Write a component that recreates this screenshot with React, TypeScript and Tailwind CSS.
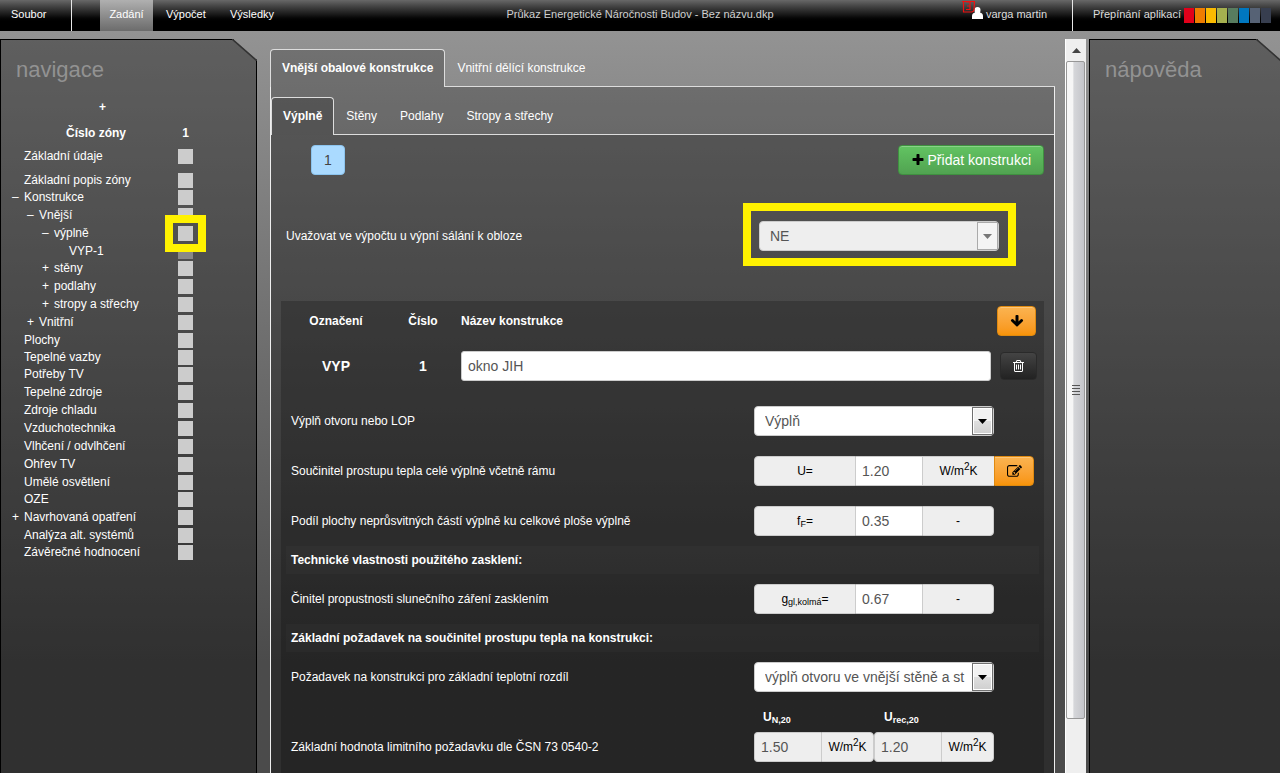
import React from "react";

type NavItem = {
  label: string;
  level: number;
  sign?: "+" | "–";
  height: string;
  active?: boolean;
  dim?: boolean;
};

const tall = "h-6";
const row = "h-[18px]";
const tight = "h-[17px]";

const navItems: NavItem[] = [
  { label: "Základní údaje", level: 0, height: tall },
  { label: "Základní popis zóny", level: 0, height: tight },
  { label: "Konstrukce", level: 0, sign: "–", height: row },
  { label: "Vnější", level: 1, sign: "–", height: row },
  { label: "výplně", level: 2, sign: "–", height: row, active: true },
  { label: "VYP-1", level: 3, height: tight, dim: true },
  { label: "stěny", level: 2, sign: "+", height: row },
  { label: "podlahy", level: 2, sign: "+", height: row },
  { label: "stropy a střechy", level: 2, sign: "+", height: row },
  { label: "Vnitřní", level: 1, sign: "+", height: row },
  { label: "Plochy", level: 0, height: tight },
  { label: "Tepelné vazby", level: 0, height: tight },
  { label: "Potřeby TV", level: 0, height: row },
  { label: "Tepelné zdroje", level: 0, height: row },
  { label: "Zdroje chladu", level: 0, height: row },
  { label: "Vzduchotechnika", level: 0, height: row },
  { label: "Vlhčení / odvlhčení", level: 0, height: row },
  { label: "Ohřev TV", level: 0, height: row },
  { label: "Umělé osvětlení", level: 0, height: tight },
  { label: "OZE", level: 0, height: row },
  { label: "Navrhovaná opatření", level: 0, sign: "+", height: row },
  { label: "Analýza alt. systémů", level: 0, height: tight },
  { label: "Závěrečné hodnocení", level: 0, height: row },
];

const indents = ["pl-[11px]", "pl-[26px]", "pl-[41px]", "pl-[56px]"];

const swatches = [
  "bg-[#e2001a]",
  "bg-[#ef7d00]",
  "bg-[#fbba00]",
  "bg-[#a5b04f]",
  "bg-[#587c5f]",
  "bg-[#0077c0]",
  "bg-[#566275]",
  "bg-[#373e4f]",
];

function Header() {
  return (
    <header className="flex h-[31px] shrink-0 bg-linear-to-b from-[#686868] via-[#1c1c1c] via-45% to-black to-75% text-[11px] text-white">
      <nav className="flex flex-1">
        <a href="#soubor" className="flex w-[71px] items-center pb-[3px] pl-[11px]">Soubor</a>
        <span className="mr-7 w-px bg-[#e8e8e8]" />
        <a href="#zadani" className="flex w-[53px] items-center justify-center bg-linear-to-b from-[#b0b0b0] to-[#6c6c6c] pb-[3px]">Zadání</a>
        <a href="#vypocet" className="flex w-16 items-center pb-[3px] pl-[13px]">Výpočet</a>
        <a href="#vysledky" className="flex items-center px-[13px] pb-[3px]">Výsledky</a>
      </nav>
      <div className="flex items-center pb-[3px] text-[#d0d0d0]">
        Průkaz Energetické Náročnosti Budov - Bez názvu.dkp
      </div>
      <div className="flex flex-1 justify-end text-[#dddddd]">
        <a href="#uzivatel" className="flex pr-[25px]">
          <svg width="24" height="20" viewBox="0 0 24 20" className="shrink-0">
            <path d="M10 19v-3q0-3 3-3.500q-.500-1-.500-2.500q0-3 3-3t3 3q0 1.500-.500 2.500q3 .500 3 3.500v3z" fill="#fff" />
            <path d="M0 1.500H13M1.500 1.500V12H9.500q2 0 2.500-2L12.500 1M4 2H8V6H5M8 6V9.500H4" fill="none" stroke="#f01010" strokeWidth="1.200" />
          </svg>
          <span className="flex items-center pb-[3px]">varga martin</span>
        </a>
        <span className="w-px bg-[#e8e8e8]" />
        <div className="flex w-[207px] items-center justify-end pr-[9px]">
          <span className="pb-[3px]">Přepínání aplikací</span>
          <div className="ml-[3px] flex gap-px">
            {swatches.map((color) => (
              <button key={color} type="button" aria-label="Aplikace" className={`h-[15px] w-[10px] ${color}`} />
            ))}
          </div>
        </div>
      </div>
    </header>
  );
}

function SidePanel({ title, className, children }: { title: string; className: string; children?: React.ReactNode }) {
  return (
    <aside className={`relative shrink-0 ${className}`}>
      <div className="h-full border border-b-0 border-black bg-black/35 pt-4 [clip-path:polygon(0_0,calc(100%-24px)_0,100%_21px,100%_100%,0_100%)]">
        <h2 className="px-[15px] text-[22px] leading-[28px] text-[#929292]">{title}</h2>
        {children}
      </div>
      <svg width="25" height="22" className="absolute top-0 right-0" viewBox="0 0 25 22">
        <path d="M0 0L25 22" stroke="#333" strokeWidth="1.500" />
      </svg>
    </aside>
  );
}

function Navigation() {
  return (
    <nav className="pr-[63px]">
      <div className="mt-[15px] flex h-4 items-center pl-[98px] font-bold">
        <button type="button">+</button>
      </div>
      <div className="mt-[10px] flex h-4 items-center pl-[65px] font-bold">
        <span className="flex-1">Číslo zóny</span>
        <span className="w-[15px] text-center">1</span>
      </div>
      <ul className="mt-2">
        {navItems.map((item) => (
          <li key={item.label} className={`flex items-start ${item.height} ${indents[item.level]}`}>
            <span className="w-3 leading-[15px]">{item.sign}</span>
            <a href="#zona" className="flex-1 leading-[15px] whitespace-nowrap">{item.label}</a>
            <span className="relative">
              <button
                type="button"
                aria-label={item.label}
                className={`block size-[15px] ${item.dim ? "bg-[#888888]" : "bg-[#cccccc]"}`}
              />
              {item.active && (
                <span className="pointer-events-none absolute -top-[11px] -left-[13px] z-10 h-[37px] w-[41px] border-8 border-[#fff200]" />
              )}
            </span>
          </li>
        ))}
      </ul>
    </nav>
  );
}

function SelectBox({ id, value, disabled }: { id: string; value: string; disabled?: boolean }) {
  return (
    <div className="relative w-60">
      <select
        id={id}
        disabled={disabled}
        className={`block h-[30px] w-full appearance-none truncate rounded-[4px] border border-[#cccccc] pr-[27px] pl-[10px] text-[14px] text-clip text-[#555555] opacity-100 ${disabled ? "bg-[#eeeeee]" : "bg-white"}`}
      >
        <option>{value}</option>
      </select>
      <span
        className={`pointer-events-none absolute top-px right-px flex h-7 w-[21px] items-center justify-center border ${disabled ? "border-[#aaaaaa] bg-[#f4f4f4] text-[#777777]" : "border-[#707070] bg-linear-to-b from-[#f2f2f2] from-50% via-[#dfdfdf] via-50% to-[#cfcfcf] text-black shadow-[inset_0_0_0_1px_white]"}`}
      >
        <svg width="9" height="5" viewBox="0 0 9 5">
          <path d="M0 0H9L4.500 5z" fill="currentColor" />
        </svg>
      </span>
    </div>
  );
}

const addon = "flex h-[30px] items-center justify-center border border-[#cccccc] bg-[#eeeeee] text-black";
const field = "h-[30px] border-y border-[#cccccc] pl-[6px] text-[14px] text-[#555555]";
const small = "text-[9px] leading-none";
const orange =
  "flex h-[30px] items-center justify-center border border-[#e08a10] bg-linear-to-b from-[#fbb450] to-[#f89406] text-black shadow-[inset_0_1px_0_rgba(255,255,255,0.25)]";

function Unit() {
  return (
    <span>
      W/m<sup className="text-[10px] leading-none">2</sup>K
    </span>
  );
}

function ValueGroup({ id, symbol, value, unit, action }: { id: string; symbol: React.ReactNode; value: string; unit: React.ReactNode; action?: boolean }) {
  return (
    <div className="flex">
      <span className={`${addon} w-[102px] rounded-l-[4px]`}><span>{symbol}</span></span>
      <input id={id} defaultValue={value} className={`${field} w-[66px] bg-white`} />
      <span className={`${addon} w-[72px] ${action ? "border-r-0" : "rounded-r-[4px]"}`}>{unit}</span>
      {action && (
        <button type="button" aria-label="Upravit" className={`${orange} w-10 rounded-r-[4px]`}>
          <svg width="15" height="15" viewBox="0 0 1792 1792" fill="currentColor">
            <path d="M888 1184l116-116-152-152-116 116v56h96v96h56zm440-720q-16-16-33 1l-350 350q-17 17-1 33t33-1l350-350q17-17 1-33zm80 594v190q0 119-84.500 203.500t-203.500 84.500h-832q-119 0-203.500-84.500t-84.500-203.500v-832q0-119 84.500-203.500t203.500-84.500h832q63 0 117 25 15 7 18 23 3 17-9 29l-49 49q-14 14-32 8-23-6-45-6h-832q-66 0-113 47t-47 113v832q0 66 47 113t113 47h832q66 0 113-47t47-113v-126q0-13 9-22l64-64q15-15 35-7t20 29zm-96-738l288 288-672 672h-288v-288zm444 132l-92 92-288-288 92-92q28-28 68-28t68 28l152 152q28 28 28 68t-28 68z" />
          </svg>
        </button>
      )}
    </div>
  );
}

function LimitGroup({ id, value }: { id: string; value: string }) {
  return (
    <div className="flex w-[120px]">
      <input id={id} disabled aria-label={id} defaultValue={value} className={`${field} w-[67px] rounded-l-[4px] border-l bg-[#eeeeee]`} />
      <span className={`${addon} flex-1 rounded-r-[4px]`}><Unit /></span>
    </div>
  );
}

function FormRow({ label, htmlFor, className, children }: { label: string; htmlFor: string; className: string; children: React.ReactNode }) {
  return (
    <div className={`flex h-[30px] items-center pl-[10px] ${className}`}>
      <label htmlFor={htmlFor} className="flex-1">{label}</label>
      <div className="w-[290px]">{children}</div>
    </div>
  );
}

function SectionTitle({ children }: { children: React.ReactNode }) {
  return <h3 className="mx-[5px] my-[10px] flex h-7 items-center bg-white/2 pl-[5px] font-bold">{children}</h3>;
}

function ConstructionCard() {
  return (
    <section className="mx-[10px] mt-[35px] flex-1 bg-black/20 pt-[5px]">
      <div className="flex h-[30px] items-center pr-2 font-bold">
        <span className="w-[110px] text-center">Označení</span>
        <span className="w-[64px] text-center">Číslo</span>
        <label htmlFor="nazev" className="ml-[6px] flex-1">Název konstrukce</label>
        <button type="button" aria-label="Dolů" className={`${orange} w-[39px] rounded-[4px]`}>
          <svg width="14" height="14" viewBox="0 0 1792 1792" fill="currentColor">
            <path d="M1675 832q0 53-37 90l-651 652q-39 37-91 37-53 0-90-37l-651-652q-38-36-38-90 0-53 38-91l74-75q39-37 91-37 53 0 90 37l294 294v-704q0-52 38-90t90-38h128q52 0 90 38t38 90v704l294-294q37-37 90-37 52 0 91 37l75 75q37 39 37 91z" />
          </svg>
        </button>
      </div>
      <div className="mt-[15px] flex h-[30px] items-center pr-[7px] text-[14px] font-bold">
        <span className="w-[110px] text-center">VYP</span>
        <span className="w-[64px] text-center">1</span>
        <input
          id="nazev"
          defaultValue="okno JIH"
          className="ml-[6px] h-[30px] min-w-0 flex-1 rounded-[3px] border border-[#cccccc] bg-white pl-[6px] font-normal text-[#555555]"
        />
        <button
          type="button"
          aria-label="Smazat"
          className="ml-[9px] flex h-7 w-[37px] items-center justify-center rounded-[4px] border border-[#2a2a2a] bg-linear-to-b from-[#444444] to-[#222222] text-white"
        >
          <svg width="11" height="14" viewBox="0 0 1408 1792" fill="currentColor">
            <path d="M512 736v576q0 14-9 23t-23 9h-64q-14 0-23-9t-9-23V736q0-14 9-23t23-9h64q14 0 23 9t9 23zm256 0v576q0 14-9 23t-23 9h-64q-14 0-23-9t-9-23V736q0-14 9-23t23-9h64q14 0 23 9t9 23zm256 0v576q0 14-9 23t-23 9h-64q-14 0-23-9t-9-23V736q0-14 9-23t23-9h64q14 0 23 9t9 23zm128 724V512H256v948q0 22 7 40.500t14.500 27 10.500 8.500h832q3 0 10.500-8.500t14.500-27 7-40.500zM480 384h448l-48-117q-7-9-17-11H546q-10 2-17 11zm928 32v64q0 14-9 23t-23 9h-96v948q0 83-47 143.500t-113 60.500H288q-66 0-113-58.500T128 1464V512H32q-14 0-23-9t-9-23v-64q0-14 9-23t23-9h309l70-167q15-37 54-63t79-26h320q40 0 79 26t54 63l70 167h309q14 0 23 9t9 23z" />
          </svg>
        </button>
      </div>
      <FormRow label="Výplň otvoru nebo LOP" htmlFor="vypln" className="mt-[25px]">
        <SelectBox id="vypln" value="Výplň" />
      </FormRow>
      <FormRow label="Součinitel prostupu tepla celé výplně včetně rámu" htmlFor="u" className="mt-5">
        <ValueGroup id="u" symbol="U=" value="1.20" unit={<Unit />} action />
      </FormRow>
      <FormRow label="Podíl plochy neprůsvitných částí výplně ku celkové ploše výplně" htmlFor="ff" className="mt-5">
        <ValueGroup id="ff" symbol={<>f<sub className={small}>F</sub>=</>} value="0.35" unit="-" />
      </FormRow>
      <SectionTitle>Technické vlastnosti použitého zasklení:</SectionTitle>
      <FormRow label="Činitel propustnosti slunečního záření zasklením" htmlFor="ggl" className="">
        <ValueGroup id="ggl" symbol={<>g<sub className={small}>gl,kolmá</sub>=</>} value="0.67" unit="-" />
      </FormRow>
      <SectionTitle>Základní požadavek na součinitel prostupu tepla na konstrukci:</SectionTitle>
      <FormRow label="Požadavek na konstrukci pro základní teplotní rozdíl" htmlFor="pozadavek" className="">
        <SelectBox id="pozadavek" value="výplň otvoru ve vnější stěně a st" />
      </FormRow>
      <div className="mt-4 flex h-[18px] items-center justify-end pr-[40px] font-bold">
        <span className="w-[121px]">U<sub className={small}>N,20</sub></span>
        <span className="w-[120px]">U<sub className={small}>rec,20</sub></span>
      </div>
      <FormRow label="Základní hodnota limitního požadavku dle ČSN 73 0540-2" htmlFor="UN20" className="mt-[6px]">
        <div className="flex">
          <LimitGroup id="UN20" value="1.50" />
          <LimitGroup id="Urec20" value="1.20" />
        </div>
      </FormRow>
    </section>
  );
}

function Workspace() {
  return (
    <main className="mt-[10px] flex min-w-0 flex-1 flex-col">
      <div className="flex">
        <button type="button" className="h-[38px] rounded-t-[4px] border border-b-0 border-[#dddddd] bg-black/22 px-[11px] pb-[2px] font-bold">
          Vnější obalové konstrukce
        </button>
        <div className="flex flex-1 border-b border-[#dddddd]">
          <button type="button" className="px-3">Vnitřní dělící konstrukce</button>
        </div>
      </div>
      <div className="flex min-h-0 flex-1 flex-col border-x border-[#eeeeee]">
        <div className="flex h-12 bg-black/22 pt-[10px]">
          <button type="button" className="h-[38px] rounded-t-[4px] border border-b-0 border-[#dddddd] bg-black/20 px-[11px] pb-[2px] font-bold">
            Výplně
          </button>
          <div className="flex flex-1 border-b border-[#dddddd]">
            <button type="button" className="px-3">Stěny</button>
            <button type="button" className="px-[11px]">Podlahy</button>
            <button type="button" className="px-3">Stropy a střechy</button>
          </div>
        </div>
        <div className="flex min-h-0 flex-1 flex-col bg-black/37">
          <div className="mt-[10px] flex justify-between pr-[10px] pl-10 text-[14px]">
            <button type="button" className="h-[30px] w-[34px] rounded-[4px] border border-[#8cc4ee] bg-[#aadaff] text-[#444444]">1</button>
            <button
              type="button"
              className="flex h-[30px] items-center gap-[3px] rounded-[4px] border border-[#3f9140] bg-linear-to-b from-[#62c462] to-[#51a351] px-3 text-white shadow-[inset_0_1px_0_rgba(255,255,255,0.25)]"
            >
              <svg width="14" height="14" viewBox="0 0 1792 1792" fill="black">
                <path d="M1600 736v192q0 40-28 68t-68 28h-416v416q0 40-28 68t-68 28h-192q-40 0-68-28t-28-68v-416h-416q-40 0-68-28t-28-68v-192q0-40 28-68t68-28h416v-416q0-40 28-68t68-28h192q40 0 68 28t28 68v416h416q40 0 68 28t28 68z" />
              </svg>
              Přidat konstrukci
            </button>
          </div>
          <div className="mt-7 flex items-center pr-[38px] pl-[15px]">
            <label htmlFor="salani" className="flex-1 pt-[3px]">Uvažovat ve výpočtu u výpní sálání k obloze</label>
            <div className="w-[273px] border-8 border-[#fff200] px-2 pt-[10px] pb-[7px]">
              <SelectBox id="salani" value="NE" disabled />
            </div>
          </div>
          <ConstructionCard />
        </div>
      </div>
    </main>
  );
}

function ScrollRail() {
  return (
    <div className="ml-[10px] flex w-[21px] shrink-0 flex-col border-l border-white bg-[#efefef]">
      <button type="button" aria-label="Nahoru" className="flex h-[22px] shrink-0 items-center justify-center">
        <svg width="9" height="5" viewBox="0 0 9 5">
          <path d="M0 5H9L4.500 0z" fill="#444" />
        </svg>
      </button>
      <div className="mr-px flex flex-1 flex-col items-center justify-center gap-[2px] rounded-[2px] border border-[#979797] bg-linear-to-r from-[#f6f6f6] from-35% via-[#d6d7da] via-40% to-[#c4c5ca]">
        <span className="h-px w-2 bg-[#555555]" />
        <span className="h-px w-2 bg-[#555555]" />
        <span className="h-px w-2 bg-[#555555]" />
        <span className="h-px w-2 bg-[#555555]" />
      </div>
      <div className="h-[54px]" />
    </div>
  );
}

export default function App() {
  return (
    <div className="flex h-screen flex-col overflow-hidden bg-[#4b4b4b] font-['Liberation_Sans',Arial,sans-serif] text-[12px] leading-4 text-white">
      <Header />
      <div className="flex min-h-0 flex-1 bg-linear-to-b from-[#939393] to-[#4b4b4b] to-85% pt-2">
        <SidePanel title="navigace" className="mr-[13px] w-[257px]">
          <Navigation />
        </SidePanel>
        <Workspace />
        <ScrollRail />
        <SidePanel title="nápověda" className="-mr-px ml-[3px] w-[192px]" />
      </div>
    </div>
  );
}
